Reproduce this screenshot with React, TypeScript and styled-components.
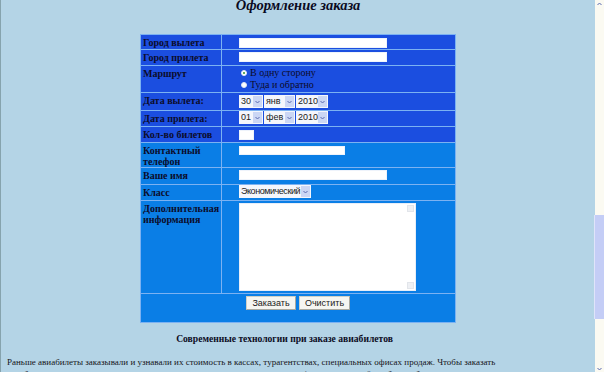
import React from "react";
import styled, { createGlobalStyle } from "styled-components";

const Global = createGlobalStyle`
  html, body { margin: 0; padding: 0; background: #b4d4e6; }
  body { font-family: "Liberation Serif", "Times New Roman", serif; }
`;

const Window = styled.div`
  width: 604px;
  height: 372px;
  display: flex;
  overflow: hidden;
  background: #b4d4e6;
`;

const LeftEdge = styled.div`
  width: 1px;
  flex: none;
  background: #86a3ad;
`;

const Content = styled.div`
  flex: 1;
  min-width: 0;
  display: flex;
  flex-direction: column;
`;

const Title = styled.h1`
  margin: -3px 0 0;
  font: italic bold 14.5px/17px "Liberation Serif", serif;
  color: #0a0a1e;
  text-align: center;
`;

const FormGrid = styled.div`
  margin: 20px auto 0;
  display: grid;
  grid-template-columns: 80px 233px;
  grid-template-rows: 14px 15px 26px 17px 15px 15px 24px 16px 15px 92px 28px;
  gap: 1px;
  padding: 1px;
  background: #7cb2f2;
`;

const LabelCell = styled.div<{ $light?: boolean }>`
  background: ${(p) => (p.$light ? "#0a7ee6" : "#1b4ee0")};
  color: #0c0c2a;
  font: bold 10px/11px "Liberation Serif", serif;
  padding: 2px 2px 0 2px;
  overflow: hidden;
`;

const ValueCell = styled.div<{ $light?: boolean; $pt?: number }>`
  background: ${(p) => (p.$light ? "#0a7ee6" : "#1b4ee0")};
  padding: ${(p) => p.$pt ?? 2}px 0 0 17px;
  display: flex;
  align-items: flex-start;
  overflow: hidden;
`;

const ButtonCell = styled.div`
  grid-column: 1 / 3;
  background: #0a7ee6;
  padding-top: 2px;
  display: flex;
  justify-content: center;
  gap: 3px;
`;

const TextInput = styled.input<{ $w: number; $h?: number }>`
  appearance: none;
  box-sizing: border-box;
  width: ${(p) => p.$w}px;
  height: ${(p) => p.$h ?? 10}px;
  margin: 0;
  padding: 0;
  border: 1px solid #eef3fb;
  background: #ffffff;
  outline: none;
`;

const RadioGroup = styled.div`
  display: flex;
  flex-direction: column;
  padding-left: 2px;
`;

const RadioLine = styled.label`
  display: flex;
  align-items: center;
  gap: 3px;
  font: 10px/12px "Liberation Serif", serif;
  color: #0c0c2a;
`;

const RadioDot = styled.span<{ $on?: boolean }>`
  width: 6px;
  height: 6px;
  border-radius: 50%;
  background: #ffffff;
  box-sizing: border-box;
  border: 1px solid #dfe6f2;
  display: flex;
  align-items: center;
  justify-content: center;
  &::after {
    content: "";
    width: 2px;
    height: 2px;
    border-radius: 50%;
    background: ${(p) => (p.$on ? "#2f8f2f" : "transparent")};
  }
`;

const SelectRow = styled.div`
  display: flex;
  gap: 1px;
`;

const SelectBox = styled.div<{ $w: number }>`
  width: ${(p) => p.$w}px;
  height: 13px;
  box-sizing: border-box;
  display: flex;
  background: #f4f6fc;
  font: 9px/13px "Liberation Sans", Arial, sans-serif;
  color: #1a1a1a;
`;

const SelectValue = styled.span<{ $tight?: boolean }>`
  flex: 1;
  padding-left: 2px;
  white-space: nowrap;
  overflow: hidden;
  letter-spacing: ${(p) => (p.$tight ? "-0.45px" : "0")};
`;

const SelectArrow = styled.span`
  width: 9px;
  flex: none;
  margin: 1px 1px 1px 0;
  background: #cbd6f4;
  display: flex;
  align-items: center;
  justify-content: center;
`;

const AreaBox = styled.div`
  width: 177px;
  height: 88px;
  display: flex;
  background: #ffffff;
  box-sizing: border-box;
  border: 1px solid #e8eef8;
`;

const Area = styled.textarea`
  flex: 1;
  border: none;
  outline: none;
  resize: none;
  margin: 0;
  padding: 0;
  background: transparent;
`;

const AreaScroll = styled.div`
  width: 7px;
  padding: 1px 1px 1px 0;
  display: flex;
  flex-direction: column;
  justify-content: space-between;
`;

const AreaScrollBtn = styled.span`
  height: 7px;
  background: #eef0f4;
  border: 1px solid #e2e5ea;
  box-sizing: border-box;
`;

const Button = styled.button<{ $w: number }>`
  width: ${(p) => p.$w}px;
  height: 14px;
  margin: 0;
  padding: 0;
  box-sizing: border-box;
  background: #f5f5f1;
  border: 1px solid #d0d0c6;
  border-right-color: #a9a9a0;
  border-bottom-color: #a9a9a0;
  font: 9px/12px "Liberation Sans", Arial, sans-serif;
  color: #1a1a1a;
`;

const Subtitle = styled.h3`
  margin: 10px 0 0;
  padding-right: 27px;
  font: bold 9.6px/12px "Liberation Serif", serif;
  color: #0c0c1e;
  text-align: center;
`;

const Paragraph = styled.p`
  margin: 11px 0 0;
  padding: 0 0 0 6px;
  max-width: 508px;
  font: 9px/12px "Liberation Serif", serif;
  color: #141420;
`;

const Scrollbar = styled.div`
  width: 9px;
  flex: none;
  display: flex;
  flex-direction: column;
  background: #fbfaf2;
`;

const ScrollArrow = styled.div`
  height: 7px;
  display: flex;
  align-items: center;
  justify-content: center;
`;

const ScrollTrack = styled.div`
  flex: 1;
  padding-top: 208px;
`;

const Thumb = styled.div`
  height: 104px;
  margin-left: -1px;
  background: #c4cdf6;
  border-left: 1px solid #dfe4fa;
`;

const Chevron = ({ up }: { up?: boolean }) => (
  <svg width="5" height="4" viewBox="0 0 5 4">
    <path
      d={up ? "M0.5 3 L2.5 1 L4.5 3" : "M0.5 1 L2.5 3 L4.5 1"}
      fill="none"
      stroke="#5a6ab0"
      strokeWidth="1"
    />
  </svg>
);

const Select = ({ w, value, tight }: { w: number; value: string; tight?: boolean }) => (
  <SelectBox $w={w}>
    <SelectValue $tight={tight}>{value}</SelectValue>
    <SelectArrow>
      <Chevron />
    </SelectArrow>
  </SelectBox>
);

export default function App() {
  return (
    <Window>
      <Global />
      <LeftEdge />
      <Content>
        <Title>Оформление заказа</Title>
        <FormGrid>
          <LabelCell>Город вылета</LabelCell>
          <ValueCell $pt={3}>
            <TextInput $w={148} />
          </ValueCell>

          <LabelCell>Город прилета</LabelCell>
          <ValueCell $pt={2}>
            <TextInput $w={148} />
          </ValueCell>

          <LabelCell>Маршрут</LabelCell>
          <ValueCell $pt={1}>
            <RadioGroup>
              <RadioLine>
                <RadioDot $on />В одну сторону
              </RadioLine>
              <RadioLine>
                <RadioDot />Туда и обратно
              </RadioLine>
            </RadioGroup>
          </ValueCell>

          <LabelCell>Дата вылета:</LabelCell>
          <ValueCell $pt={2}>
            <SelectRow>
              <Select w={24} value="30" />
              <Select w={31} value="янв" />
              <Select w={32} value="2010" />
            </SelectRow>
          </ValueCell>

          <LabelCell>Дата прилета:</LabelCell>
          <ValueCell $pt={0}>
            <SelectRow>
              <Select w={24} value="01" />
              <Select w={31} value="фев" />
              <Select w={32} value="2010" />
            </SelectRow>
          </ValueCell>

          <LabelCell>Кол-во билетов</LabelCell>
          <ValueCell $pt={3}>
            <TextInput $w={15} />
          </ValueCell>

          <LabelCell $light>Контактный телефон</LabelCell>
          <ValueCell $light $pt={3}>
            <TextInput $w={106} $h={9} />
          </ValueCell>

          <LabelCell $light>Ваше имя</LabelCell>
          <ValueCell $light $pt={2}>
            <TextInput $w={148} />
          </ValueCell>

          <LabelCell $light>Класс</LabelCell>
          <ValueCell $light $pt={0}>
            <Select w={72} value="Экономический" tight />
          </ValueCell>

          <LabelCell $light>Дополнительная информация</LabelCell>
          <ValueCell $light $pt={2}>
            <AreaBox>
              <Area />
              <AreaScroll>
                <AreaScrollBtn />
                <AreaScrollBtn />
              </AreaScroll>
            </AreaBox>
          </ValueCell>

          <ButtonCell>
            <Button $w={50}>Заказать</Button>
            <Button $w={51}>Очистить</Button>
          </ButtonCell>
        </FormGrid>
        <Subtitle>Современные технологии при заказе авиабилетов</Subtitle>
        <Paragraph>
          Раньше авиабилеты заказывали и узнавали их стоимость в кассах, турагентствах,
          специальных офисах продаж. Чтобы заказать авиабилет, приходилось лично ехать в
          кассу или долго дозваниваться по телефону, а затем ещё и забирать билеты.
        </Paragraph>
      </Content>
      <Scrollbar>
        <ScrollArrow>
          <Chevron up />
        </ScrollArrow>
        <ScrollTrack>
          <Thumb />
        </ScrollTrack>
        <ScrollArrow>
          <Chevron />
        </ScrollArrow>
      </Scrollbar>
    </Window>
  );
}
